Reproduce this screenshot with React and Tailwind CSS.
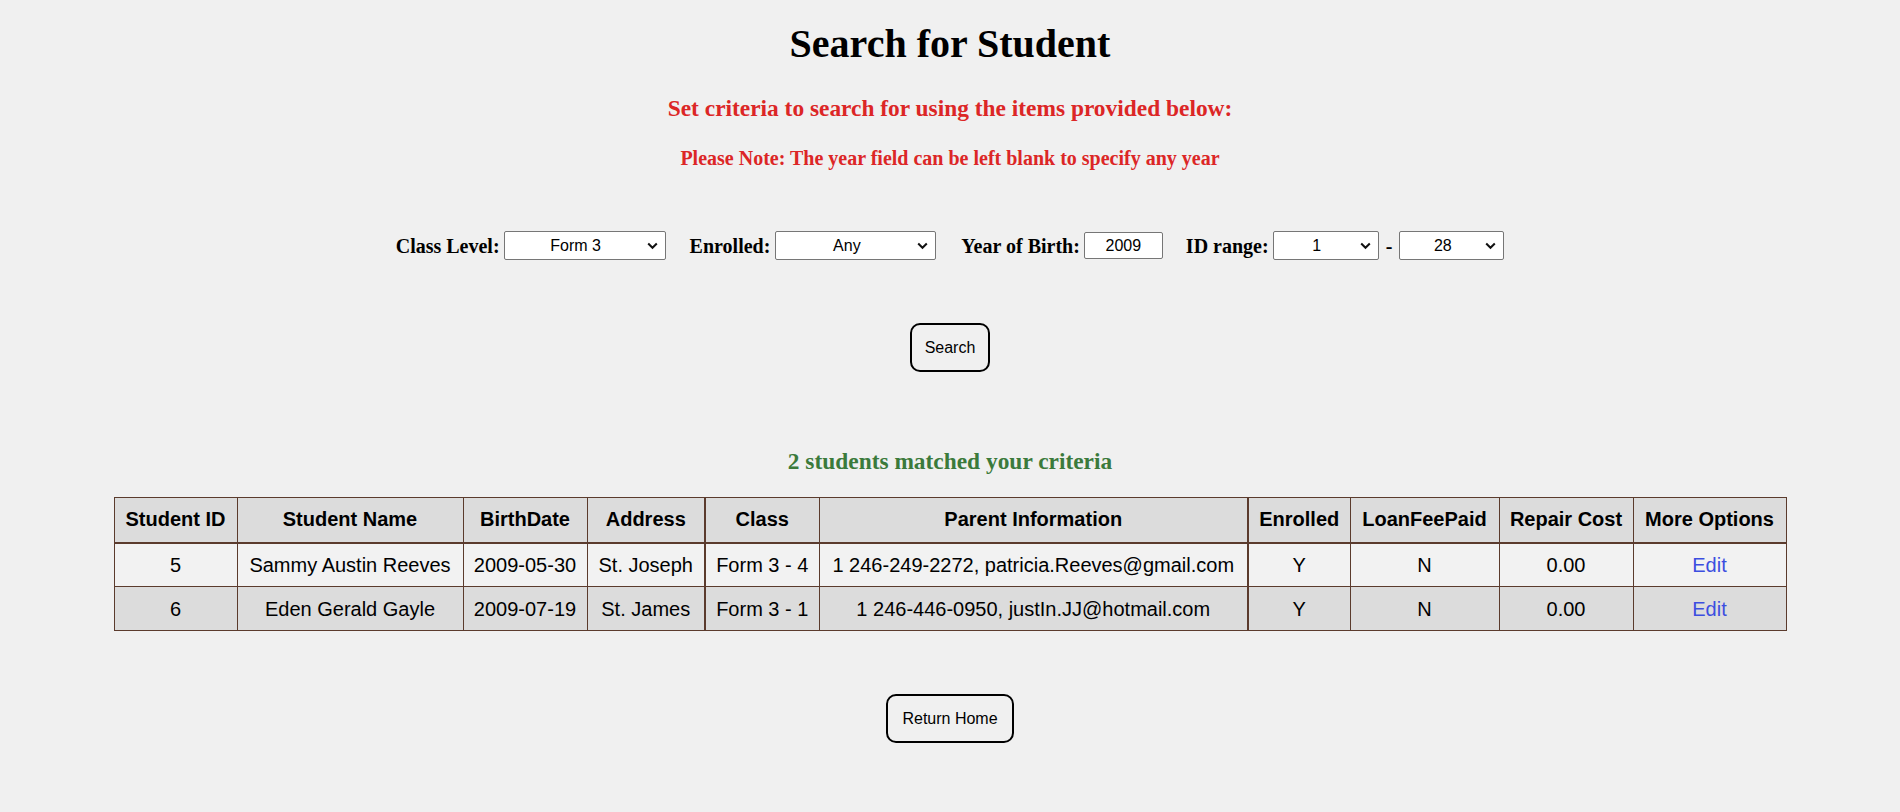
const serif = "font-['Liberation_Serif','Times_New_Roman',serif]";
const sans = "font-['Liberation_Sans',Arial,sans-serif]";

function Chevron() {
  return (
    <svg
      className="pointer-events-none absolute right-[8px] top-1/2 -translate-y-1/2"
      width="11"
      height="8"
      viewBox="0 0 11 8"
      fill="none"
    >
      <path d="M1.2 1.5 5.5 5.8 9.8 1.5" stroke="#111" strokeWidth="2" />
    </svg>
  );
}

function Select({ width, value, options }) {
  return (
    <div className="relative" style={{ width }}>
      <select
        defaultValue={value}
        className={`${sans} block h-[29px] w-full appearance-none rounded-[2px] border border-[#767676] bg-white pr-[20px] pl-[2px] text-[16px] font-normal text-black text-center [text-align-last:center] outline-none`}
      >
        {options.map((o) => (
          <option key={o}>{o}</option>
        ))}
      </select>
      <Chevron />
    </div>
  );
}

const students = [
  {
    id: 5,
    name: "Sammy Austin Reeves",
    dob: "2009-05-30",
    address: "St. Joseph",
    cls: "Form 3 - 4",
    parent: "1 246-249-2272, patricia.Reeves@gmail.com",
    enrolled: "Y",
    loan: "N",
    repair: "0.00",
  },
  {
    id: 6,
    name: "Eden Gerald Gayle",
    dob: "2009-07-19",
    address: "St. James",
    cls: "Form 3 - 1",
    parent: "1 246-446-0950, justIn.JJ@hotmail.com",
    enrolled: "Y",
    loan: "N",
    repair: "0.00",
  },
];

const headers = [
  ["Student ID", 123, ""],
  ["Student Name", 226, ""],
  ["BirthDate", 124, ""],
  ["Address", 118, ""],
  ["Class", 114, "border-l-2"],
  ["Parent Information", 429, ""],
  ["Enrolled", 102, "border-l-2"],
  ["LoanFeePaid", 149, ""],
  ["Repair Cost", 134, ""],
  ["More Options", 153, ""],
];

export default function App() {
  return (
    <div className="min-h-screen bg-[#f0f0f0] text-black">
      <div className="flex flex-col items-center">
        <h1 className={`${serif} mt-[21px] text-[40px] leading-[46px] font-bold`}>
          Search for Student
        </h1>
        <h3 className={`${serif} mt-[28px] text-[23.4px] leading-[27px] font-bold text-[#dc2626]`}>
          Set criteria to search for using the items provided below:
        </h3>
        <h4 className={`${serif} mt-[25px] text-[20px] leading-[23px] font-bold text-[#dc2626]`}>
          Please Note: The year field can be left blank to specify any year
        </h4>

        <div className={`${serif} mt-[61px] flex h-[29px] items-center text-[20px] font-bold`}>
          <span className="mr-[4px]">Class Level:</span>
          <Select width={162} value="Form 3" options={["Any", "Form 1", "Form 2", "Form 3", "Form 4", "Form 5"]} />
          <span className="ml-[24px] mr-[5px]">Enrolled:</span>
          <Select width={161} value="Any" options={["Any", "Y", "N"]} />
          <span className="ml-[25px] mr-[4px]">Year of Birth:</span>
          <input
            defaultValue="2009"
            className={`${sans} h-[27px] w-[79px] rounded-[2px] border border-[#767676] bg-white text-center text-[16px] font-normal text-black outline-none`}
          />
          <span className="ml-[23px] mr-[4px]">ID range:</span>
          <Select width={106} value="1" options={["1", "2", "3", "4", "5", "6"]} />
          <span className="mx-[7px]">-</span>
          <Select width={105} value="28" options={["26", "27", "28"]} />
        </div>

        <button
          className={`${sans} mt-[63px] h-[49px] rounded-[10px] border-2 border-black bg-[#f0f0f0] px-[13px] text-[16px] text-black`}
        >
          Search
        </button>

        <h3 className={`${serif} mt-[76px] text-[23.4px] leading-[27px] font-bold text-[#3b7a3b]`}>
          2 students matched your criteria
        </h3>

        <table className={`${sans} mt-[22px] w-[1672px] table-fixed border-collapse border border-[#5b3b2d] text-[20px]`}>
          <colgroup>
            {headers.map(([h, w]) => (
              <col key={h} style={{ width: w }} />
            ))}
          </colgroup>
          <thead>
            <tr className="bg-[#dcdcdc]">
              {headers.map(([h, , extra]) => (
                <th
                  key={h}
                  className={`h-[45px] border border-b-2 border-[#5b3b2d] px-1 pb-[2px] text-center font-bold ${extra}`}
                >
                  {h}
                </th>
              ))}
            </tr>
          </thead>
          <tbody>
            {students.map((s, i) => (
              <tr key={s.id} className={i % 2 === 0 ? "bg-[#f2f2f2]" : "bg-[#dcdcdc]"}>
                <td className="h-[44px] border border-[#5b3b2d] text-center">{s.id}</td>
                <td className="border border-[#5b3b2d] text-center">{s.name}</td>
                <td className="border border-[#5b3b2d] text-center">{s.dob}</td>
                <td className="border border-[#5b3b2d] text-center">{s.address}</td>
                <td className="border border-l-2 border-[#5b3b2d] text-center">{s.cls}</td>
                <td className="border border-[#5b3b2d] text-center">{s.parent}</td>
                <td className="border border-l-2 border-[#5b3b2d] text-center">{s.enrolled}</td>
                <td className="border border-[#5b3b2d] text-center">{s.loan}</td>
                <td className="border border-[#5b3b2d] text-center">{s.repair}</td>
                <td className="border border-[#5b3b2d] text-center">
                  <a href="#" className="text-[#3c4ee0]">
                    Edit
                  </a>
                </td>
              </tr>
            ))}
          </tbody>
        </table>

        <button
          className={`${sans} mt-[63px] h-[49px] rounded-[10px] border-2 border-black bg-[#f0f0f0] px-[14px] text-[16px] text-black`}
        >
          Return Home
        </button>
      </div>
    </div>
  );
}
